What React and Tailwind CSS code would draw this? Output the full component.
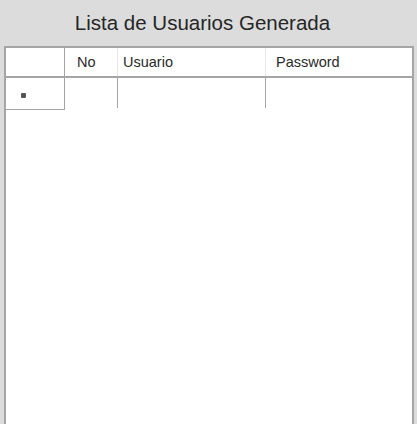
export default function App() {
  return (
    <div className="w-[417px] h-[424px] bg-[#dcdcdc] flex flex-col overflow-hidden" style={{ fontFamily: '"Liberation Sans", Arial, sans-serif' }}>
      <div className="h-[46px] flex items-center justify-center text-[20.5px] text-[#262626] pt-[1px] pr-[12px]">
        Lista de Usuarios Generada
      </div>

      <div className="ml-[4px] w-[410px] flex-1 bg-white border-2 border-b-0 border-[#a5a5a5] flex flex-col">
        {/* header */}
        <div className="flex h-[30px] border-b-2 border-[#a5a5a5] text-[14.5px] text-[#2a2a2a]">
          <div className="w-[59px] border-r border-[#a5a5a5]" />
          <div className="w-[53px] border-r border-[#e6e6e6] flex items-center pl-[12px] pt-[2px]">No</div>
          <div className="w-[148px] border-r border-[#e6e6e6] flex items-center pl-[5px] pt-[2px]">Usuario</div>
          <div className="flex-1 flex items-center pl-[10px] pt-[2px]">Password</div>
        </div>

        {/* new row */}
        <div className="flex h-[32px]">
          <div className="w-[59px] border-r border-b border-[#a5a5a5] flex items-center pl-[15px] pt-[3px]">
            <span className="w-[5px] h-[5px] rounded-[1px] bg-[#555]" />
          </div>
          <div className="w-[53px] border-r border-[#a5a5a5] mb-[2px]" />
          <div className="w-[148px] border-r border-[#a5a5a5] mb-[2px]" />
          <div className="flex-1" />
        </div>
      </div>
    </div>
  );
}
